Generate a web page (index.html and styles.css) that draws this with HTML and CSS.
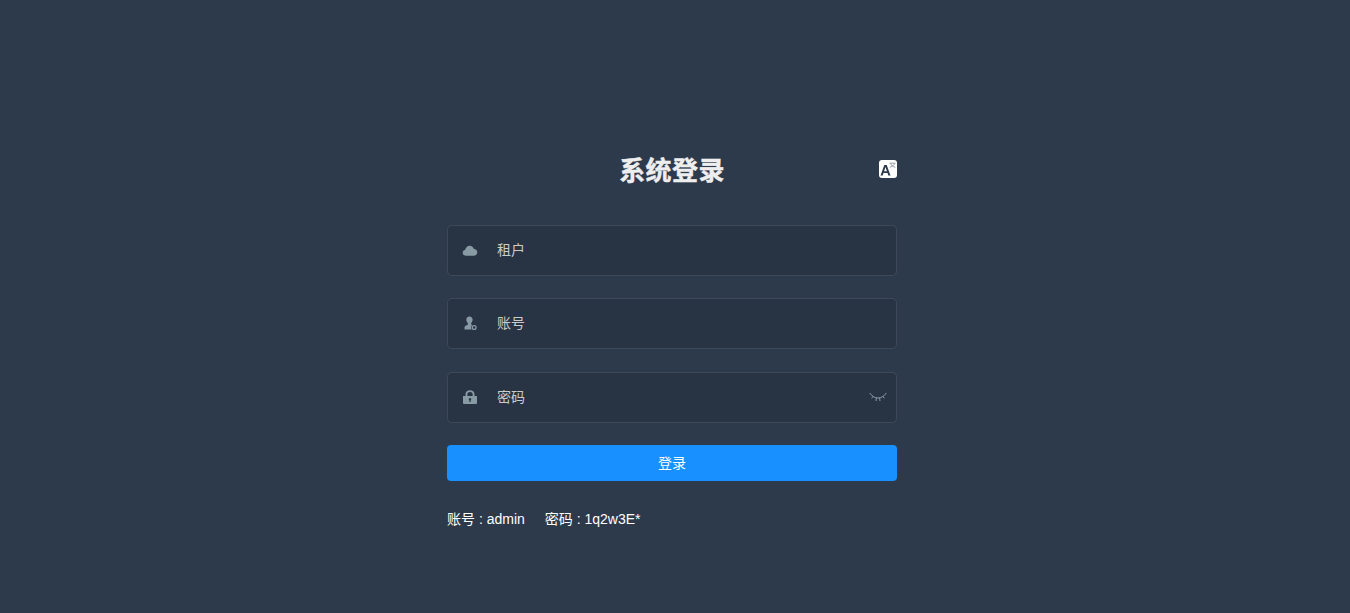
FILE: index.html
```html
<!DOCTYPE html>
<html lang="zh">
<head>
<meta charset="utf-8">
<title>系统登录</title>
<link rel="stylesheet" href="styles.css">
</head>
<body>
<main class="login">
  <form class="form">
    <div class="title-row">
      <h1 class="title">系统登录</h1>
      <button type="button" class="lang" aria-label="语言">
        <svg viewBox="0 0 18 18" width="18" height="18">
          <rect width="18" height="18" rx="3" fill="#fff"/>
          <path d="M1.500 15.500 5.300 5h2.400l3.800 10.500H9.300l-.8-2.500H4.500l-.8 2.500zM5.100 11.200h2.800L6.500 7z" fill="#2d3a4b"/>
          <path d="M10.500 3.200h6M11.700 3.800c.7 1.800 2.200 3 4.600 3.500M15.400 3.600c-.7 1.800-2.200 3-4.600 3.700" fill="none" stroke="#7d8791" stroke-width=".8"/>
        </svg>
      </button>
    </div>
    <div class="field">
      <span class="icon">
        <svg viewBox="0 0 16 16" width="16" height="16"><path d="M4 13.700c-2 0-3.300-1.300-3.300-3 0-1.500 1-2.700 2.500-3C3.600 5.400 5.400 3.700 7.700 3.700c2 0 3.700 1.300 4.200 3.200 1.900.1 3.400 1.500 3.400 3.400 0 1.900-1.500 3.400-3.400 3.400z" fill="#889aa4"/></svg>
      </span>
      <input class="input" type="text" placeholder="租户">
    </div>
    <div class="field">
      <span class="icon">
        <svg viewBox="0 0 16 16" width="16" height="16"><path d="M7.500 1.500c1.900 0 3.100 1.400 3.100 3.300 0 1.300-.6 2.500-1.400 3.200v1.500c.5.200 1 .4 1.400.6-1.100.5-1.700 1.700-1.500 3 .1.600.3 1 .7 1.400H2.500v-2.300c0-1.100 1.700-2 3.300-2.500V8c-.9-.7-1.500-1.900-1.500-3.200 0-1.900 1.200-3.300 3.200-3.300z" fill="#889aa4"/><circle cx="12.200" cy="12.500" r="1.900" fill="none" stroke="#889aa4" stroke-width="1.300"/></svg>
      </span>
      <input class="input" type="text" placeholder="账号">
    </div>
    <div class="field">
      <span class="icon">
        <svg viewBox="0 0 16 16" width="16" height="16"><path fill-rule="evenodd" d="M3.500 7V5.300C3.500 2.900 5.400 1.300 8 1.300s4.500 1.600 4.500 4V7h-1.900V5.300c0-1.300-1.100-2.200-2.600-2.200s-2.600.9-2.600 2.200V7zM1 7h14v7a1 1 0 0 1-1 1H2a1 1 0 0 1-1-1zM8 9a1.300 1.300 0 0 0-.6 2.400V13h1.200v-1.600A1.300 1.300 0 0 0 8 9z" fill="#889aa4"/></svg>
      </span>
      <input class="input" type="password" placeholder="密码">
      <span class="eye">
        <svg viewBox="0 0 18 12" width="18" height="12"><path d="M1.500 3c2 2.600 4.500 4 7.500 4s5.500-1.400 7.500-4M1.500 3l-.8-1M16.500 3l.8-1M4.200 5.200 2.600 7.300M13.800 5.200l1.600 2.100M7.400 6.800 7 10M10.600 6.800 11 10" fill="none" stroke="#889aa4" stroke-width="1"/></svg>
      </span>
    </div>
    <button type="button" class="submit"><span class="submit-label">登录</span></button>
    <div class="tips">
      <span>账号 : admin</span>
      <span>密码 : 1q2w3E*</span>
    </div>
  </form>
</main>
</body>
</html>
```

FILE: styles.css
```css
* {
  box-sizing: border-box;
}

html,
body {
  margin: 0;
  height: 100%;
}

body {
  background: #2d3a4b;
  font-family: "Liberation Sans", "Noto Sans CJK SC", sans-serif;
  font-size: 14px;
  overflow: hidden;
}

.login {
  display: flex;
  justify-content: center;
  padding-right: 6px;
}

.form {
  width: 450px;
  padding-top: 153px;
}

.title-row {
  position: relative;
  height: 72px;
  text-align: center;
}

.title {
  margin: 0;
  color: #eee;
  font-size: 26px;
  font-weight: 700;
  letter-spacing: 0.4px;
  line-height: 36px;
  -webkit-text-stroke: 0.4px #eee;
}

.lang {
  position: absolute;
  top: 7px;
  right: 0;
  display: block;
  width: 18px;
  height: 18px;
  padding: 0;
  border: 0;
  background: none;
}

.lang svg {
  display: block;
}

.field {
  display: flex;
  align-items: center;
  height: 51px;
  margin-bottom: 22.4px;
  padding-bottom: 1px;
  border: 1px solid rgba(255, 255, 255, 0.1);
  border-radius: 5px;
  background: rgba(0, 0, 0, 0.1);
}

.icon {
  display: flex;
  flex: none;
  width: 49px;
  padding-left: 14px;
}

.input {
  flex: 1;
  min-width: 0;
  height: 100%;
  padding: 0;
  border: 0;
  outline: 0;
  background: transparent;
  color: #fff;
  font: inherit;
}

.input::placeholder {
  color: #c9cbcd;
  opacity: 1;
}

.eye {
  display: flex;
  flex: none;
  margin-right: 9px;
}

.submit {
  display: block;
  width: 100%;
  height: 36px;
  padding: 0 0 2px;
  border: 0;
  border-radius: 4px;
  background: #1890ff;
  color: #fff;
  font: inherit;
}

.tips {
  display: flex;
  gap: 20px;
  margin-top: 29.5px;
  color: #fff;
  line-height: 16px;
}
```
